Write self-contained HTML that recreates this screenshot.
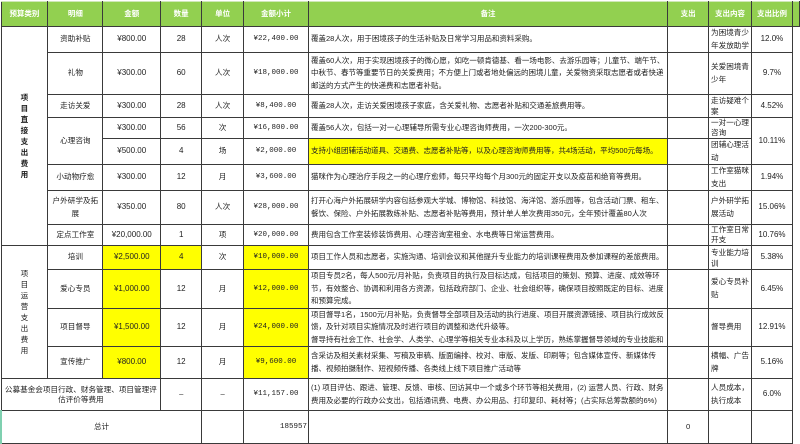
<!DOCTYPE html>
<html><head><meta charset="utf-8"><style>
body{margin:0;width:800px;height:434px;overflow:hidden;background:#fff;font-family:"Liberation Sans","Noto Sans CJK SC",sans-serif;}
table{border-collapse:collapse;table-layout:fixed;position:absolute;left:0;top:1px;}
td{border:1px solid #3a3a3a;font-size:7.6px;line-height:12.5px;color:#222;text-align:center;vertical-align:middle;padding:0 1px;overflow:hidden;}
tr.h td{background:#92d050;color:#fff;height:24px;font-size:7.5px;font-weight:bold;border-top:1px solid #cfe8b8;}
td.n{text-align:left;padding-left:2px;font-size:7.5px;}
td.y{background:#ffff00;}
td.a{font-size:8px;}
td.m{font-family:"Liberation Mono","Noto Sans CJK SC",monospace;font-size:7.5px;}
td.c{text-align:left;padding-left:2px;}
td.v{line-height:11px;font-weight:bold;}
td.x{border:none;border-left:1px solid #3a3a3a;}
</style></head><body>
<table>
<colgroup><col style="width:47px"><col style="width:55px"><col style="width:58px"><col style="width:41px"><col style="width:42px"><col style="width:65px"><col style="width:360px"><col style="width:41px"><col style="width:43px"><col style="width:41px"><col style="width:7px"></colgroup>
<tr class="h"><td>预算类别</td><td>明细</td><td>金额</td><td>数量</td><td>单位</td><td>金额小计</td><td>备注</td><td>支出</td><td>支出内容</td><td>支出比例</td><td style="border-left:none"></td></tr>
<tr style="height:23px"><td rowspan="8" class="v">项<br>目<br>直<br>接<br>支<br>出<br>费<br>用</td><td>资助补贴</td><td class="a">¥800.00</td><td class="a">28</td><td>人次</td><td class="m">¥22,400.00</td><td class="n">覆盖28人次，用于困境孩子的生活补贴及日常学习用品和资料采购。</td><td></td><td class="c">为困境青少年发放助学</td><td class="a">12.0%</td><td class="x"></td></tr>
<tr style="height:42px"><td>礼物</td><td class="a">¥300.00</td><td class="a">60</td><td>人次</td><td class="m">¥18,000.00</td><td class="n">覆盖60人次，用于实现困境孩子的微心愿，如吃一顿肯德基、看一场电影、去游乐园等；儿童节、端午节、中秋节、春节等重要节日的关爱费用；不方便上门或者地处偏远的困境儿童，关爱物资采取志愿者或者快递邮送的方式产生的快递费和志愿者补贴。</td><td></td><td class="c">关爱困境青少年</td><td class="a">9.7%</td><td class="x"></td></tr>
<tr style="height:22px"><td>走访关爱</td><td class="a">¥300.00</td><td class="a">28</td><td>人次</td><td class="m">¥8,400.00</td><td class="n">覆盖28人次，走访关爱困境孩子家庭，含关爱礼物、志愿者补贴和交通差旅费用等。</td><td></td><td class="c" style="line-height:11px">走访疑难个案</td><td class="a">4.52%</td><td class="x"></td></tr>
<tr style="height:19px"><td rowspan="2">心理咨询</td><td class="a">¥300.00</td><td class="a">56</td><td>次</td><td class="m">¥16,800.00</td><td class="n">覆盖56人次，包括一对一心理辅导所需专业心理咨询师费用，一次200-300元。</td><td></td><td class="c" style="line-height:10px">一对一心理咨询</td><td rowspan="2" class="a">10.11%</td><td class="x"></td></tr>
<tr style="height:26px"><td class="a">¥500.00</td><td class="a">4</td><td>场</td><td class="m">¥2,000.00</td><td class="n y">支持小组团辅活动道具、交通费、志愿者补贴等，以及心理咨询师费用等，共4场活动，平均500元每场。</td><td></td><td class="c">团辅心理活动</td><td class="x"></td></tr>
<tr style="height:24px"><td>小动物疗愈</td><td class="a">¥300.00</td><td class="a">12</td><td>月</td><td class="m">¥3,600.00</td><td class="n">猫咪作为心理治疗手段之一的心理疗愈师，每只平均每个月300元的固定开支以及疫苗和绝育等费用。</td><td></td><td class="c">工作室猫咪支出</td><td class="a">1.94%</td><td class="x"></td></tr>
<tr style="height:34px"><td>户外研学及拓展</td><td class="a">¥350.00</td><td class="a">80</td><td>人次</td><td class="m">¥28,000.00</td><td class="n">打开心海户外拓展研学内容包括参观大学城、博物馆、科技馆、海洋馆、游乐园等，包含活动门票、租车、餐饮、保险、户外拓展教练补贴、志愿者补贴等费用，预计单人单次费用350元，全年预计覆盖80人次</td><td></td><td class="c">户外研学拓展活动</td><td class="a">15.06%</td><td class="x"></td></tr>
<tr style="height:20px"><td>定点工作室</td><td class="a">¥20,000.00</td><td class="a">1</td><td>项</td><td class="m">¥20,000.00</td><td class="n">费用包含工作室装修装饰费用、心理咨询室租金、水电费等日常运营费用。</td><td></td><td class="c" style="line-height:10px">工作室日常开支</td><td class="a">10.76%</td><td class="x"></td></tr>
<tr style="height:24px"><td rowspan="4" style="line-height:11px">项<br>目<br>运<br>营<br>支<br>出<br>费<br>用</td><td>培训</td><td class="y a">¥2,500.00</td><td class="y a">4</td><td>次</td><td class="m y">¥10,000.00</td><td class="n">项目工作人员和志愿者，实施沟通、培训会议和其他提升专业能力的培训课程费用及参加课程的差旅费用。</td><td></td><td class="c" style="line-height:11px">专业能力培训</td><td class="a">5.38%</td><td class="x"></td></tr>
<tr style="height:37px"><td>爱心专员</td><td class="y a">¥1,000.00</td><td class="a">12</td><td>月</td><td class="m y">¥12,000.00</td><td class="n">项目专员2名，每人500元/月补贴，负责项目的执行及目标达成，包括项目的策划、预算、进度、成效等环节，有效整合、协调和利用各方资源，包括政府部门、企业、社会组织等，确保项目按照既定的目标、进度和预算完成。</td><td></td><td class="c">爱心专员补贴</td><td class="a">6.45%</td><td class="x"></td></tr>
<tr style="height:38px"><td>项目督导</td><td class="y a">¥1,500.00</td><td class="a">12</td><td>月</td><td class="m y">¥24,000.00</td><td class="n">项目督导1名，1500元/月补贴，负责督导全部项目及活动的执行进度、项目开展资源链接、项目执行成效反馈，及针对项目实施情况及时进行项目的调整和迭代升级等。<br>督导持有社会工作、社会学、人类学、心理学等相关专业本科及以上学历，熟练掌握督导领域的专业技能和</td><td></td><td class="c">督导费用</td><td class="a">12.91%</td><td class="x"></td></tr>
<tr style="height:32px"><td>宣传推广</td><td class="y a">¥800.00</td><td class="a">12</td><td>月</td><td class="m y">¥9,600.00</td><td class="n">含采访及相关素材采集、写稿及审稿、版面编排、校对、审版、发版、印刷等；包含媒体宣传、新媒体传播、视频拍摄制作、短视频传播、各类线上线下项目推广活动等</td><td></td><td class="c">横幅、广告牌</td><td class="a">5.16%</td><td class="x"></td></tr>
<tr style="height:32px"><td colspan="3" style="line-height:10px">公募基金会项目行政、财务管理、项目管理评估评价等费用</td><td>–</td><td>–</td><td class="m">¥11,157.00</td><td class="n">(1) 项目评估、跟进、管理、反馈、审核、回访其中一个或多个环节等相关费用，(2) 运营人员、行政、财务费用及必要的行政办公支出，包括通讯费、电费、办公用品、打印复印、耗材等；(占实际总筹款额的6%)</td><td></td><td class="c">人员成本，执行成本</td><td class="a">6.0%</td><td class="x"></td></tr>
<tr style="height:33px"><td colspan="4" style="border-left:2px solid #7fd0b0">总计</td><td></td><td class="m" style="text-align:right">185957</td><td></td><td>0</td><td></td><td></td><td class="x"></td></tr>
</table>
</body></html>
